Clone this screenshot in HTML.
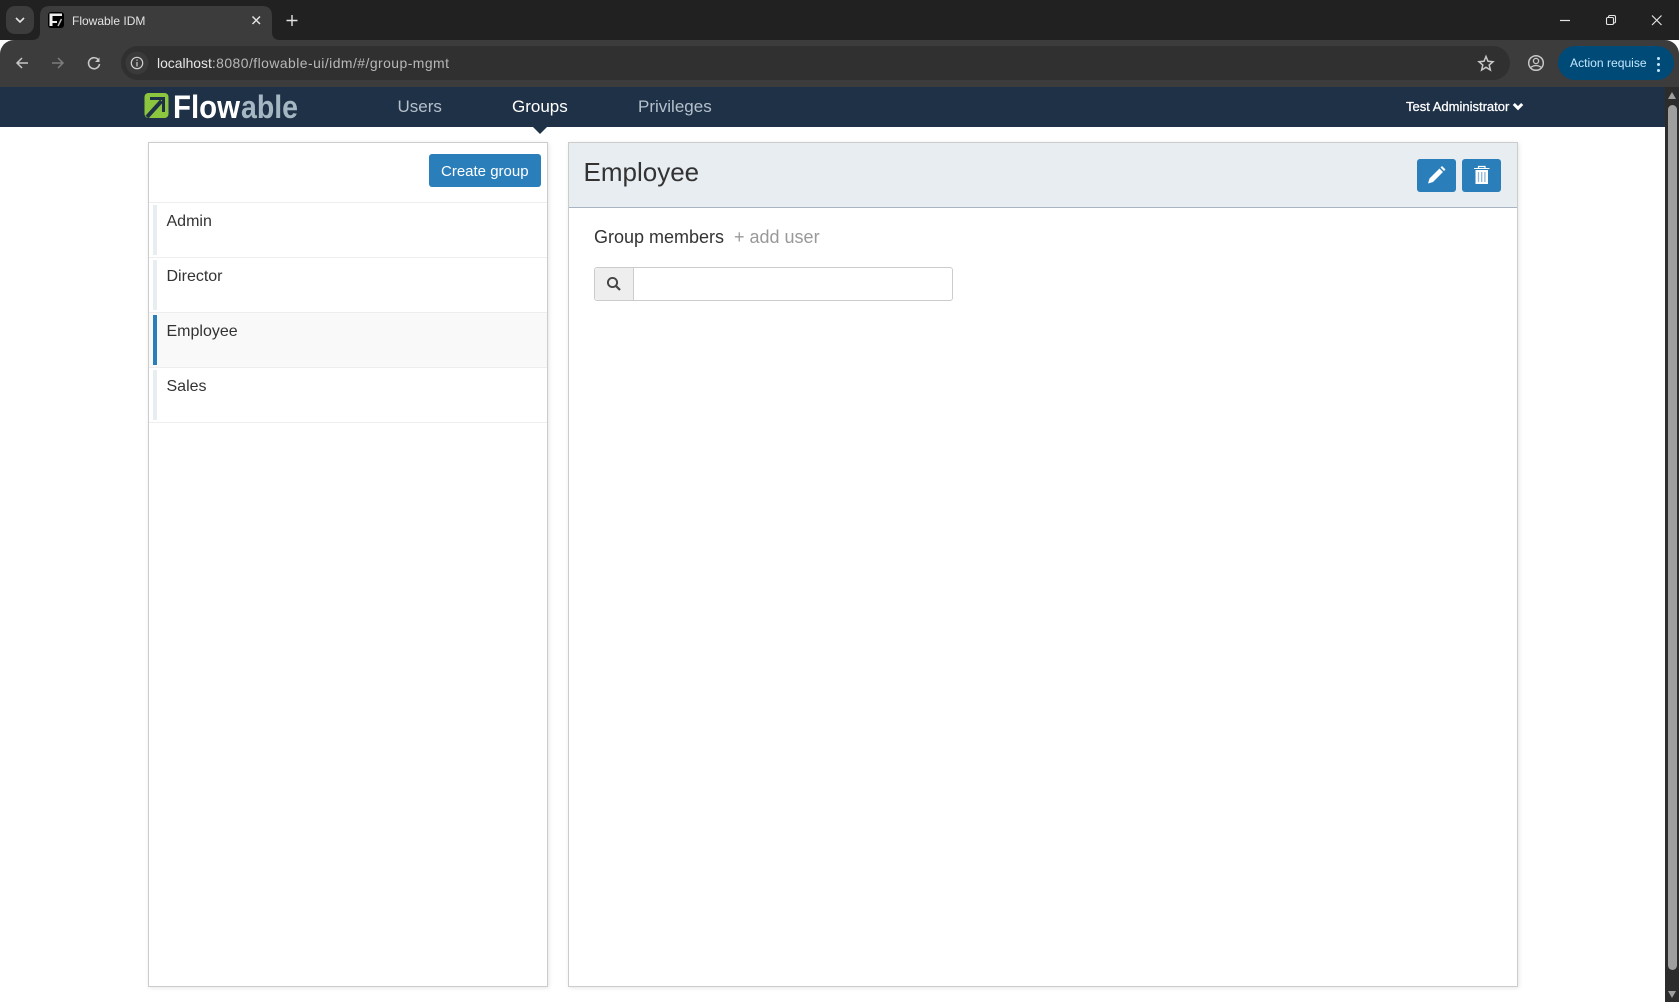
<!DOCTYPE html>
<html>
<head>
<meta charset="utf-8">
<title>Flowable IDM</title>
<style>
html,body{margin:0;padding:0;width:1679px;height:1002px;overflow:hidden;background:#fff;font-family:"Liberation Sans",sans-serif;color:#333}
.a{position:absolute}
.t{position:absolute;white-space:nowrap}
</style>
</head>
<body>
<!-- browser chrome -->
<div class="a" style="left:0;top:0;width:1679px;height:40px;background:#202120"></div>
<div class="a" style="left:0;top:40px;width:1679px;height:47px;background:#3c3c3c;border-radius:14px 14px 0 0"></div>
<div class="a" style="left:6px;top:6px;width:28px;height:28px;background:#3c3c3c;border-radius:9px"></div>
<svg class="a" style="left:0;top:0" width="300" height="87">
  <path d="M32 40 Q40 40 40 32 V16 Q40 6 50 6 H262 Q272 6 272 16 V32 Q272 40 280 40 Z" fill="#3c3c3c"/>
  <path d="M16 18 L20 22 L24 18" stroke="#e3e3e3" stroke-width="1.600" fill="none"/>
  <rect x="48" y="12" width="16" height="16" rx="3" fill="#000"/>
  <path d="M49.500 13.500 H62 V16 H52.500 V21 H57 V23 H52.500 V26 H49.500 Z" fill="#eee"/>
  <path d="M58 26 L61.500 19" stroke="#bbb" stroke-width="1.500" fill="none"/>
  <path d="M252.500 16.500 L260 24 M260 16.500 L252.500 24" stroke="#e3e3e3" stroke-width="1.500"/>
  <path d="M292 15 V26 M286.500 20.500 H297.500" stroke="#e3e3e3" stroke-width="1.400"/>
  <path d="M28 63 H17 M22 58 L17 63 L22 68" stroke="#c7c7c7" stroke-width="1.500" fill="none"/>
  <path d="M52 63 H63 M58 58 L63 63 L58 68" stroke="#7d7d7d" stroke-width="1.500" fill="none"/>
  <path d="M98.500 60 A5.500 5.500 0 1 0 99.500 64" stroke="#c7c7c7" stroke-width="1.600" fill="none"/>
  <path d="M99.500 57.500 V62 H95 Z" fill="#c7c7c7"/>
</svg>
<div class="t" style="left:72px;top:13.500px;font-size:12px;line-height:15px;color:#e3e3e3">Flowable IDM</div>
<div class="a" style="left:121px;top:46px;width:1389px;height:34px;background:#303030;border-radius:17px"></div>
<svg class="a" style="left:124px;top:46px" width="30" height="34">
  <circle cx="13" cy="17" r="11.500" fill="#3a3a3a"/>
  <circle cx="13" cy="17" r="5.700" stroke="#d0d0d0" stroke-width="1.200" fill="none"/>
  <path d="M13 16 V20.500 M13 13.500 V14.800" stroke="#d0d0d0" stroke-width="1.200"/>
</svg>
<div class="t" style="left:157px;top:55px;font-size:13.900px;line-height:17px;color:#b8b8b8"><span style="color:#e6e6e6">localhost</span><span style="letter-spacing:.47px">:8080/flowable-ui/idm/#/group-mgmt</span></div>
<svg class="a" style="left:1470px;top:46px" width="209" height="41">
  <path d="M16 10.500 L18 15.300 L23 15.700 L19.200 19 L20.400 24 L16 21.300 L11.600 24 L12.800 19 L9 15.700 L14 15.300 Z" stroke="#c7c7c7" stroke-width="1.500" fill="none"/>
  <circle cx="66" cy="17" r="7.300" stroke="#c7c7c7" stroke-width="1.500" fill="none"/>
  <circle cx="66" cy="15" r="2.600" stroke="#c7c7c7" stroke-width="1.300" fill="none"/>
  <path d="M60.500 21.500 Q66 17.500 71.500 21.500" stroke="#c7c7c7" stroke-width="1.300" fill="none"/>
</svg>
<div class="a" style="left:1558px;top:46px;width:116px;height:34px;background:#004a77;border-radius:17px"></div>
<div class="t" style="left:1570px;top:55px;font-size:12.100px;line-height:16px;color:#c2e7ff">Action requise</div>
<div class="a" style="left:1656.500px;top:56.500px;width:3px;height:3px;background:#c2e7ff;border-radius:50%;box-shadow:0 6px 0 #c2e7ff,0 12px 0 #c2e7ff"></div>
<svg class="a" style="left:1530px;top:10px" width="149" height="20">
  <path d="M30 10.500 H40" stroke="#e3e3e3" stroke-width="1.200"/>
  <rect x="76.500" y="7.500" width="7" height="7" rx="1.200" stroke="#e3e3e3" stroke-width="1.100" fill="none"/>
  <path d="M78.500 7 Q78.500 5.500 80 5.500 H84 Q85.500 5.500 85.500 7 V11.500 Q85.500 13 84 13" stroke="#e3e3e3" stroke-width="1.100" fill="none"/>
  <path d="M122 5.500 L131.500 15 M131.500 5.500 L122 15" stroke="#e3e3e3" stroke-width="1.200"/>
</svg>

<!-- nav -->
<div class="a" style="left:0;top:87px;width:1665px;height:40px;background:#1f3147"></div>
<svg class="a" style="left:140px;top:90px" width="170" height="34">
  <rect x="4.500" y="3" width="24" height="25" rx="4" fill="#8cc63f"/>
  <path d="M10 8.500 H23.500 V22" stroke="#1f3147" stroke-width="3" fill="none"/>
  <path d="M7 27 L21.500 11" stroke="#1f3147" stroke-width="4" fill="none"/>
  <text x="33" y="28" font-family="'Liberation Sans',sans-serif" font-weight="700" font-size="32" fill="#fff" textLength="67" lengthAdjust="spacingAndGlyphs">Flow</text>
  <text x="101" y="28" font-family="'Liberation Sans',sans-serif" font-weight="700" font-size="32" fill="#a5b7c2" textLength="57" lengthAdjust="spacingAndGlyphs">able</text>
</svg>
<div class="t" style="left:397.500px;top:97px;font-size:17px;line-height:20px;color:#b4c0cb">Users</div>
<div class="t" style="left:512px;top:97px;font-size:17px;line-height:20px;color:#fff">Groups</div>
<div class="t" style="left:638px;top:97px;font-size:17px;line-height:20px;color:#b4c0cb">Privileges</div>
<div class="a" style="left:533px;top:127px;width:0;height:0;border-left:7px solid transparent;border-right:7px solid transparent;border-top:7px solid #1f3147"></div>
<div class="t" style="left:1406px;top:99px;font-size:13px;line-height:15px;color:#fff;-webkit-text-stroke:.25px #fff">Test Administrator</div>
<svg class="a" style="left:1512px;top:102px" width="12" height="9"><path d="M1.800 2 L6 6.200 L10.200 2" stroke="#fff" stroke-width="3" fill="none"/></svg>

<!-- scrollbar -->
<div class="a" style="left:1665px;top:87px;width:14px;height:915px;background:#2c2c2c"></div>
<div class="a" style="left:1668px;top:105px;width:8.500px;height:865px;background:#9f9f9f;border-radius:5px"></div>
<div class="a" style="left:1668px;top:92px;width:0;height:0;border-left:4.500px solid transparent;border-right:4.500px solid transparent;border-bottom:7px solid #9f9f9f"></div>
<div class="a" style="left:1668px;top:991px;width:0;height:0;border-left:4.500px solid transparent;border-right:4.500px solid transparent;border-top:7px solid #9f9f9f"></div>

<!-- left panel -->
<div class="a" style="left:148px;top:142px;width:398px;height:843px;border:1px solid #ccc;box-shadow:1px 1px 4px rgba(0,0,0,.1);background:#fff"></div>
<div class="a" style="left:429px;top:154px;width:112px;height:33px;background:#2a7fba;border-radius:3px"></div>
<div class="t" style="left:441px;top:163px;font-size:15px;line-height:17px;color:#fff">Create group</div>
<div class="a" style="left:149px;top:202px;width:398px;height:1px;background:#eee"></div>
<div class="a" style="left:149px;top:257px;width:398px;height:1px;background:#eee"></div>
<div class="a" style="left:149px;top:312px;width:398px;height:1px;background:#eee"></div>
<div class="a" style="left:149px;top:313px;width:398px;height:54px;background:#f9f9f9"></div>
<div class="a" style="left:149px;top:367px;width:398px;height:1px;background:#eee"></div>
<div class="a" style="left:149px;top:422px;width:398px;height:1px;background:#eee"></div>
<div class="a" style="left:153px;top:205px;width:4px;height:50px;background:#e8edf1"></div>
<div class="a" style="left:153px;top:260px;width:4px;height:50px;background:#e8edf1"></div>
<div class="a" style="left:153px;top:315px;width:4px;height:50px;background:#2a7fba"></div>
<div class="a" style="left:153px;top:370px;width:4px;height:50px;background:#e8edf1"></div>
<div class="t" style="left:166.500px;top:213px;font-size:16px;line-height:18px">Admin</div>
<div class="t" style="left:166.500px;top:268px;font-size:16px;line-height:18px">Director</div>
<div class="t" style="left:166.500px;top:323px;font-size:16px;line-height:18px">Employee</div>
<div class="t" style="left:166.500px;top:378px;font-size:16px;line-height:18px">Sales</div>

<!-- right panel -->
<div class="a" style="left:568px;top:142px;width:948px;height:843px;border:1px solid #ccc;box-shadow:1px 1px 4px rgba(0,0,0,.1);background:#fff"></div>
<div class="a" style="left:569px;top:143px;width:948px;height:64px;background:#e8edf1;border-bottom:1px solid #a9b4c2"></div>
<div class="t" style="left:583.500px;top:157px;font-size:26px;line-height:30px">Employee</div>
<div class="a" style="left:1417px;top:159px;width:39px;height:33px;background:#2a7fba;border-radius:3px"></div>
<div class="a" style="left:1462px;top:159px;width:39px;height:33px;background:#2a7fba;border-radius:3px"></div>
<svg class="a" style="left:1417px;top:159px" width="84" height="33">
  <path d="M11 24.500 L12.500 19.500 L22.500 9.500 L26 13 L16 23 Z" fill="#fff"/>
  <path d="M23.500 8.500 L25 7 L28.500 10.500 L27 12 Z" fill="#fff"/>
  <rect x="58.500" y="11" width="12.500" height="14" fill="#fff"/>
  <path d="M61.500 13 V23 M64.700 13 V23 M67.900 13 V23" stroke="#8fb9d8" stroke-width="1.300"/>
  <path d="M57 9 H72.500 V10 H57 Z" fill="#fff"/>
  <path d="M61.500 9 V7.500 H68 V9" stroke="#fff" stroke-width="1.200" fill="none"/>
</svg>
<div class="t" style="left:594px;top:227px;font-size:18px;line-height:20px">Group members</div>
<div class="t" style="left:734px;top:227px;font-size:18px;line-height:20px;color:#999">+ add user</div>
<div class="a" style="left:594px;top:267px;width:357px;height:32px;border:1px solid #ccc;border-radius:3px;background:#fff"></div>
<div class="a" style="left:595px;top:268px;width:38px;height:32px;background:#eee;border-right:1px solid #ccc;border-radius:3px 0 0 3px"></div>
<svg class="a" style="left:605px;top:275px" width="18" height="18">
  <circle cx="7.500" cy="7.500" r="4.600" stroke="#444" stroke-width="1.900" fill="none"/>
  <path d="M11 11 L15 15" stroke="#444" stroke-width="2.200"/>
</svg>
</body>
</html>
